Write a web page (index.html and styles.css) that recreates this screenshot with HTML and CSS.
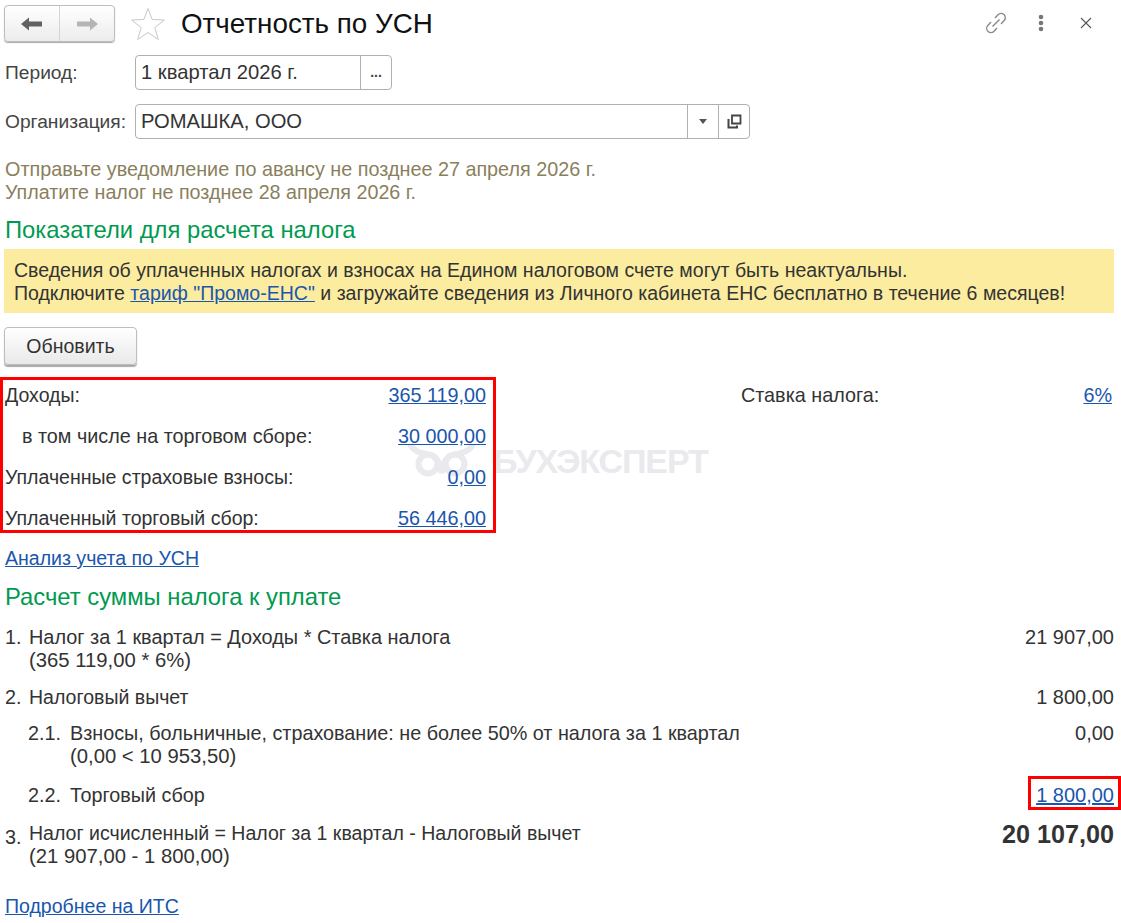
FILE: index.html
```html
<!DOCTYPE html>
<html lang="ru">
<head>
<meta charset="utf-8">
<title>Отчетность по УСН</title>
<link rel="stylesheet" href="styles.css">
</head>
<body>
<div class="page">
  <header class="titlebar">
    <div class="navgroup">
      <button class="navbtn"><svg width="24" height="14" viewBox="0 0 24 14"><path d="M1 7 9 .5V4.500H22V9.500H9V13.500Z" fill="#616161"/></svg></button>
      <button class="navbtn"><svg width="24" height="14" viewBox="0 0 24 14"><path d="M23 7 15 .5V4.500H2V9.500H15V13.500Z" fill="#b5b5b5"/></svg></button>
    </div>
    <svg class="star" width="36" height="34" viewBox="0 0 36 34"><path d="M18 1.500 22.200 12.500 34.500 13 24.800 20.500 28.300 32.500 18 25.500 7.700 32.500 11.200 20.500 1.500 13 13.800 12.500Z" fill="#fff" stroke="#c8c8c8"/></svg>
    <h1 class="title">Отчетность по УСН</h1>
    <div class="winicons">
      <svg class="ic-link" width="24" height="24" viewBox="0 0 24 24" fill="none" stroke="#8a8a8a" stroke-width="1.400"><path d="M11 7 14 3.800a4.200 4.200 0 0 1 6.200 5.700L17 13"/><path d="M13 17 10 20.200a4.200 4.200 0 0 1-6.200-5.700L7 11"/><path d="M8.500 15.500 15.500 8.500"/></svg>
      <svg class="ic-dots" width="8" height="18" viewBox="0 0 8 18" fill="#777"><circle cx="4" cy="3" r="2.300"/><circle cx="4" cy="9" r="2.300"/><circle cx="4" cy="15" r="2.300"/></svg>
      <svg class="ic-close" width="12" height="12" viewBox="0 0 12 12" stroke="#555" stroke-width="1.100"><path d="M1 1 11 11M11 1 1 11"/></svg>
    </div>
  </header>

  <div class="formrow period">
    <label class="flabel">Период:</label>
    <div class="field w-period">
      <span class="fvalue">1 квартал 2026 г.</span>
      <span class="fbtn dots">...</span>
    </div>
  </div>
  <div class="formrow org">
    <label class="flabel">Организация:</label>
    <div class="field w-org">
      <span class="fvalue">РОМАШКА, ООО</span>
      <span class="fbtn"><svg width="8" height="5" viewBox="0 0 8 5"><path d="M0 0H8L4 5Z" fill="#555"/></svg></span>
      <span class="fbtn"><svg width="15" height="15" viewBox="0 0 15 15" fill="none" stroke="#444" stroke-width="2"><path d="M5 1.500H13.500V9.500H5Z" stroke-width="1.800"/><path d="M1.500 5V13.500H10V11.500"/></svg></span>
    </div>
  </div>

  <p class="notice">Отправьте уведомление по авансу не позднее 27 апреля 2026 г.<br><span class="notice-b">Уплатите налог не позднее 28 апреля 2026 г.</span></p>

  <h2 class="section first">Показатели для расчета налога</h2>
  <div class="banner">Сведения об уплаченных налогах и взносах на Едином налоговом счете могут быть неактуальны.<br>Подключите <a href="#">тариф "Промо-ЕНС"</a> и загружайте сведения из Личного кабинета ЕНС бесплатно в течение 6 месяцев!</div>
  <button class="refresh">Обновить</button>

  <div class="indicators">
    <div class="watermark" aria-hidden="true">
      <svg width="70" height="36" viewBox="0 0 70 36" fill="none" stroke="#e9e9ee" stroke-width="6"><circle cx="20" cy="23" r="9.500"/><circle cx="47" cy="23" r="9.500"/><path d="M2 3C6 12 16 12 24 14.500C28 16 31 19 33.500 32C36 19 39 16 43 14.500C51 12 61 12 65 3"/></svg>
      <span class="wmtext">БУХЭКСПЕРТ</span>
    </div>
    <div class="redbox">
      <div class="irow"><span>Доходы:</span><a href="#">365 119,00</a></div>
      <div class="irow"><span class="indent">в том числе на торговом сборе:</span><a href="#">30 000,00</a></div>
      <div class="irow"><span>Уплаченные страховые взносы:</span><a href="#">0,00</a></div>
      <div class="irow"><span>Уплаченный торговый сбор:</span><a href="#">56 446,00</a></div>
    </div>
    <div class="rate"><span>Ставка налога:</span><a href="#">6%</a></div>
  </div>

  <a class="plainlink analysis" href="#">Анализ учета по УСН</a>

  <h2 class="section second">Расчет суммы налога к уплате</h2>

  <div class="calc">
    <div class="crow h60"><span class="num">1.</span><span class="desc"><span class="t20">Налог за 1 квартал = Доходы * Ставка налога</span><br><span class="wide">(365 119,00 * 6%)</span></span><span class="sum">21 907,00</span></div>
    <div class="crow h36"><span class="num">2.</span><span class="desc narrow">Налоговый вычет</span><span class="sum">1 800,00</span></div>
    <div class="crow h62 sub"><span class="num">2.1.</span><span class="desc">Взносы, больничные, страхование: не более 50% от налога за 1 квартал<br><span class="wide">(0,00 &lt; 10 953,50)</span></span><span class="sum">0,00</span></div>
    <div class="crow h38 sub"><span class="num">2.2.</span><span class="desc">Торговый сбор</span><a class="sum boxed" href="#">1 800,00</a></div>
    <div class="crow h60"><span class="num low">3.</span><span class="desc"><span class="narrow">Налог исчисленный = Налог за 1 квартал - Налоговый вычет</span><br><span class="wide">(21 907,00 - 1 800,00)</span></span><span class="sum total">20 107,00</span></div>
  </div>

  <a class="plainlink its" href="#">Подробнее на ИТС</a>
</div>
</body>
</html>
```
FILE: styles.css
```css
* { box-sizing: border-box; }
html, body { margin: 0; padding: 0; background: #fff; }
body { font-family: "Liberation Sans", Arial, sans-serif; font-size: 19.8px; color: #333; overflow: hidden; }
.page { width: 1121px; height: 923px; padding: 0 7px 0 4px; line-height: 23px; }
a { color: #1a56ad; text-decoration: underline; }

.titlebar { display: flex; align-items: center; height: 48px; }
.navgroup { display: flex; width: 111px; height: 37px; margin-top: -1px; border: 1px solid #bdbdbd; border-radius: 4px; background: linear-gradient(#fff, #ececec); box-shadow: 0 1px 1px #aaa; }
.navbtn { flex: 1; padding: 0; border: 0; background: none; display: flex; align-items: center; justify-content: center; }
.navbtn + .navbtn { border-left: 1px solid #d4d4d4; }
.star { margin-left: 15px; }
.title { margin: 0 0 0 15px; font-size: 27.8px; font-weight: 400; color: #111; line-height: 34px; }
.winicons { margin-left: auto; display: flex; align-items: center; padding-right: 22px; margin-top: -3px; }
.ic-dots { margin-left: 29px; }
.ic-close { margin-left: 35px; }

.formrow { display: flex; align-items: center; height: 36px; font-size: 20.2px; }
.period { margin-top: 6px; }
.org { margin-top: 13px; }
.flabel { width: 131px; padding-left: 1px; color: #444; flex: none; font-size: 19.2px; }
.field { display: flex; height: 35px; border: 1px solid #b0b0b0; border-radius: 4px; align-items: stretch; background: #fff; }
.w-period { width: 257px; }
.w-org { width: 615px; }
.fvalue { flex: 1; padding-left: 5px; line-height: 33px; color: #333; }
.fbtn { width: 31px; border-left: 1px solid #b0b0b0; display: flex; align-items: center; justify-content: center; }
.dots { font-weight: 700; font-size: 14px; color: #444; }

.notice { margin: 19px 0 0 1px; color: #8a7f5c; }
.notice-b { font-size: 19.7px; }
.section { margin: 0 0 0 1px; font-weight: 400; font-size: 23.8px; color: #009a50; line-height: 28px; }
.section.first { margin-top: 12px; }
.banner { margin-top: 5px; padding: 10px 10px 8px; height: 64px; background: #fbeca0; color: #333; font-size: 19.55px; line-height: 22.5px; }
.refresh { display: block; margin-top: 14px; width: 133px; height: 38px; font: 19.5px "Liberation Sans", Arial, sans-serif; color: #333; border: 1px solid #bdbdbd; border-radius: 4px; background: linear-gradient(#fff, #e9e9e9); box-shadow: 0 2px 1px #a9a9a9; }

.indicators { position: relative; display: flex; margin: 12px 0 0 -4px; }
.redbox { position: relative; width: 496px; height: 156px; border: 3px solid #f00; padding: 1px 7px 0 2px; }
.irow { display: flex; justify-content: space-between; height: 41px; line-height: 29px; }
.irow span { font-size: 19.55px; }
.irow .indent { padding-left: 17px; font-size: 19.8px; }
.rate { position: relative; margin-left: 245px; width: 371px; display: flex; justify-content: space-between; line-height: 37px; height: 37px; }
.watermark { position: absolute; left: 408px; top: 64px; height: 36px; }
.watermark svg { display: block; }
.wmtext { position: absolute; left: 85px; top: 2px; color: #e9e9ee; font-weight: 700; font-size: 34px; letter-spacing: -1.1px; line-height: 36px; white-space: nowrap; }

.plainlink { display: block; width: max-content; margin-left: 1px; font-size: 19.55px; }
.analysis { margin-top: 14px; }
.section.second { margin-top: 13px; }

.calc { margin-top: 15px; }
.crow { display: flex; align-items: flex-start; }
.h60 { height: 60px; }
.h38 { height: 38px; }
.h36 { height: 36px; }
.h62 { height: 62px; }
.num { width: 25px; padding-left: 1px; flex: none; }
.low { padding-top: 4px; }
.sub { padding-left: 24px; }
.sub .num { width: 42px; padding-left: 0; }
.desc { flex: 1; }
.t20 { font-size: 19.9px; }
.wide { font-size: 20.3px; }
.narrow { font-size: 19.55px; }
.sum { text-align: right; font-size: 20px; }
.boxed { position: relative; }
.boxed::after { content: ""; position: absolute; left: -8px; right: -7px; top: -8px; bottom: -3px; border: 3px solid #f00; }
.total { font-weight: 700; font-size: 25.2px; color: #333; line-height: 24px; }
.its { margin-top: 13px; }
```
